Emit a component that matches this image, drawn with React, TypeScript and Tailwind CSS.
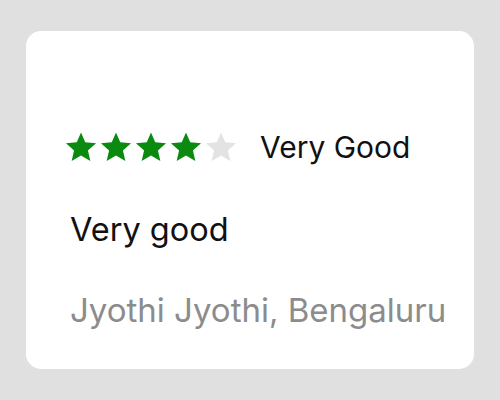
import React from "react";

function Star({ filled }: { filled: boolean }) {
    return (
        <svg width="34" height="34" viewBox="0 0 24 24" className="shrink-0">
            <polygon
                points="12,1.8 15,8.7 22.6,9.4 16.9,14.4 18.6,21.9 12,18 5.4,21.9 7.1,14.4 1.4,9.4 9,8.7"
                fill={filled ? "#0a8a0f" : "#e3e3e3"}
            />
        </svg>
    );
}

function App() {
    const rating = 4;

    return (
        <div className="w-[500px] h-[400px] bg-[#e0e0e0] p-[31px_26px] font-['Inter',sans-serif]">
            <div className="w-[448px] h-[338px] bg-white rounded-[15px] pl-[44px] pt-[99px] flex flex-col">
                <div className="flex items-center">
                    <div className="flex -ml-[6px] gap-[1px]">
                        {[1, 2, 3, 4, 5].map((n) => (
                            <Star key={n} filled={n <= rating} />
                        ))}
                    </div>
                    <span className="ml-[22px] text-[30px] leading-none text-[#111]">
                        Very Good
                    </span>
                </div>
                <p className="mt-[50px] text-[32.5px] leading-none text-[#111]">
                    Very good
                </p>
                <p className="mt-[47px] text-[33px] leading-none text-[#8c8c8c]">
                    Jyothi Jyothi, Bengaluru
                </p>
            </div>
        </div>
    );
}

export default App;
